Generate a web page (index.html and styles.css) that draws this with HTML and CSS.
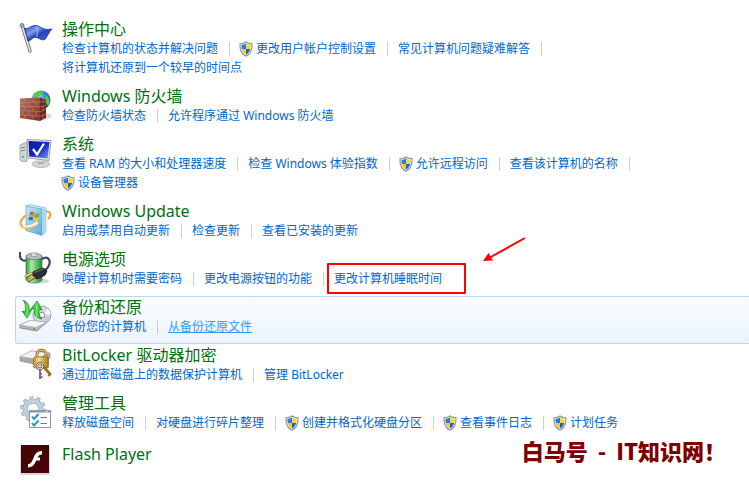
FILE: index.html
```html
<!DOCTYPE html>
<html lang="zh-CN">

<head>
    <meta charset="UTF-8">
    <meta name="viewport" content="width=device-width, initial-scale=1.0">
    <title>系统和安全</title>
    <link rel="stylesheet" href="styles.css">
</head>

<body>

    <!-- Shared shapes -->
    <svg class="defs" width="0" height="0" aria-hidden="true">
        <defs>
            <linearGradient id="flagBlue" x1="0" y1="0" x2="1" y2="1">
                <stop offset="0" stop-color="#2a48c8" />
                <stop offset=".35" stop-color="#7f9bea" />
                <stop offset=".55" stop-color="#2440b8" />
                <stop offset="1" stop-color="#4f74dc" />
            </linearGradient>
            <radialGradient id="globe" cx=".35" cy=".3" r=".8">
                <stop offset="0" stop-color="#a5e4ff" />
                <stop offset=".45" stop-color="#2f8be0" />
                <stop offset="1" stop-color="#0a3a9a" />
            </radialGradient>
            <linearGradient id="brick" x1="0" y1="0" x2="1" y2="1">
                <stop offset="0" stop-color="#b9705c" />
                <stop offset="1" stop-color="#7c3022" />
            </linearGradient>
            <linearGradient id="screen" x1="0" y1="0" x2="1" y2="1">
                <stop offset="0" stop-color="#0a18a0" />
                <stop offset=".5" stop-color="#1228c4" />
                <stop offset="1" stop-color="#7f9cf4" />
            </linearGradient>
            <linearGradient id="box" x1="0" y1="0" x2="1" y2="1">
                <stop offset="0" stop-color="#c4e8f8" />
                <stop offset="1" stop-color="#5fa8d4" />
            </linearGradient>
            <linearGradient id="metal" x1="0" y1="0" x2="0" y2="1">
                <stop offset="0" stop-color="#fafafa" />
                <stop offset="1" stop-color="#9a9ea2" />
            </linearGradient>
            <linearGradient id="battery" x1="0" y1="0" x2="1" y2="0">
                <stop offset="0" stop-color="#2b9a3c" />
                <stop offset=".35" stop-color="#a6eca0" />
                <stop offset="1" stop-color="#1c8a30" />
            </linearGradient>
            <linearGradient id="gold" x1="0" y1="0" x2="1" y2="0">
                <stop offset="0" stop-color="#c2922c" />
                <stop offset=".35" stop-color="#f3dc8c" />
                <stop offset="1" stop-color="#a87414" />
            </linearGradient>
            <linearGradient id="green" x1="0" y1="0" x2="1" y2="0">
                <stop offset="0" stop-color="#0c9c1c" />
                <stop offset=".5" stop-color="#6ee85c" />
                <stop offset="1" stop-color="#0c9c1c" />
            </linearGradient>
            <symbol id="shield" viewBox="0 0 14 16">
                <path d="M7 .3C5.300 1.600 3 2.200.5 2.200.2 8.500 1.400 13 7 15.700 12.600 13 13.800 8.500 13.500 2.200 11 2.200 8.700 1.600 7 .3z" fill="#8b8f94" />
                <path d="M7 1.400C5.400 2.500 3.500 3 1.500 3.100 1.400 8.500 2.600 12.300 7 14.600 11.400 12.300 12.600 8.500 12.500 3.100 10.500 3 8.600 2.500 7 1.400z" fill="#e2e5e6" />
                <path d="M7 2.600C5.700 3.400 4.200 3.800 2.500 4 2.500 5.600 2.600 6.900 2.900 8H7z" fill="#1f7fe0" />
                <path d="M7 2.600C8.300 3.400 9.800 3.800 11.500 4 11.500 5.600 11.400 6.900 11.100 8H7z" fill="#fbd62c" />
                <path d="M2.900 8C3.500 10.500 4.800 12.300 7 13.500V8z" fill="#fbc81c" />
                <path d="M11.100 8C10.500 10.500 9.200 12.300 7 13.500V8z" fill="#1466d0" />
            </symbol>
        </defs>
    </svg>

    <main class="panel">

        <section class="category">
            <svg class="icon" viewBox="0 0 34 34" aria-hidden="true">
                <path d="M3 3L11 29" stroke="#70757c" stroke-width="3.400" stroke-linecap="round" />
                <path d="M3 3L11 29" stroke="#e4e6e8" stroke-width="1.600" stroke-linecap="round" />
                <circle cx="3" cy="3.500" r="2" fill="#a4a8ac" stroke="#62666a" stroke-width=".6" />
                <path d="M5.500 6C9 8 12 3 17 3.500 22 4 24 9 33 7 30 10 29 13 26.500 17 22 20 19 14 15 15.500 12.500 16.500 11 19.500 9 19z" fill="url(#flagBlue)" stroke="#1c318f" stroke-width=".8" />
                <path d="M17 4.500C19 7 19 12 17.500 15" fill="none" stroke="#adc0f4" stroke-width="1.500" opacity=".6" />
            </svg>
            <div class="content">
                <h2><a href="#">操作中心</a></h2>
                <ul class="tasks">
                    <li><a href="#">检查计算机的状态并解决问题</a></li>
                    <li><a href="#"><svg class="shield" aria-hidden="true"><use href="#shield" /></svg>更改用户帐户控制设置</a></li>
                    <li><a href="#">常见计算机问题疑难解答</a></li>
                    <li><a href="#">将计算机还原到一个较早的时间点</a></li>
                </ul>
            </div>
        </section>

        <section class="category">
            <svg class="icon" viewBox="0 0 34 34" aria-hidden="true">
                <ellipse cx="25" cy="27" rx="8" ry="3" fill="#d8d8d8" />
                <circle cx="22" cy="11" r="9.500" fill="url(#globe)" />
                <path d="M15 5C18 2 22 2 24 3 23 6 20 7 18 9 16 9 14 8 15 5zM26 5C30 8 32 12 30 16 28 17 27 14 25 12 25 9 28 8 26 5z" fill="#5cc63c" />
                <path d="M1 9.500L21 8.500V32L1 29z" fill="url(#brick)" />
                <path d="M21 8.500L27 11V29L21 32z" fill="#6c2a1e" />
                <path d="M1 13.500L21 13M1 17.500L21 17.800 27 16.500M1 21.500L21 22.500 27 20.500M1 25.500L21 27.200 27 25M21 13L27 13M6 9.500V13.400M14 9.200V13M3.500 13.400V17.500M10 13.300V17.600M17 13V17.700M6 17.600V21.700M14 17.700V22M3.500 21.600V25.700M10 22V26.300M17 22.300V26.700M6 26V29.600M14 26.700V30.800M24 10V13M24 17V21.500M24 25.500V30.500" fill="none" stroke="#c08a7a" stroke-width=".6" />
            </svg>
            <div class="content">
                <h2><a href="#">Windows 防火墙</a></h2>
                <ul class="tasks">
                    <li><a href="#">检查防火墙状态</a></li>
                    <li><a href="#">允许程序通过 Windows 防火墙</a></li>
                </ul>
            </div>
        </section>

        <section class="category">
            <svg class="icon" viewBox="0 0 34 34" aria-hidden="true">
                <path d="M1 8L8 5V24L4 25 1 23z" fill="#d3d6d9" stroke="#888d92" stroke-width=".7" />
                <path d="M2.500 11L6 10M2.500 14L6 13" stroke="#777c80" />
                <circle cx="4" cy="20" r="1.100" fill="#35b83a" />
                <ellipse cx="22" cy="27" rx="9" ry="3.500" fill="#d3d6da" stroke="#9a9fa4" stroke-width=".6" />
                <path d="M18 22H26L25 27H19z" fill="url(#metal)" />
                <path d="M8 2.500L32 3.500 30 23.500 9 21z" fill="#e6e8eb" stroke="#8a8f95" stroke-width=".8" />
                <path d="M9.500 4L30.500 5 28.700 21.500 10.300 19.500z" fill="url(#screen)" />
                <path d="M14 12L18 17.500 25 6.500" fill="none" stroke="#fff" stroke-width="2.200" />
            </svg>
            <div class="content">
                <h2><a href="#">系统</a></h2>
                <ul class="tasks">
                    <li><a href="#">查看 RAM 的大小和处理器速度</a></li>
                    <li><a href="#">检查 Windows 体验指数</a></li>
                    <li><a href="#"><svg class="shield" aria-hidden="true"><use href="#shield" /></svg>允许远程访问</a></li>
                    <li><a href="#">查看该计算机的名称</a></li>
                    <li><a href="#"><svg class="shield" aria-hidden="true"><use href="#shield" /></svg>设备管理器</a></li>
                </ul>
            </div>
        </section>

        <section class="category">
            <svg class="icon" viewBox="0 0 34 34" aria-hidden="true">
                <path d="M25 8C32 6 33 11 29 15" fill="none" stroke="#eda53a" stroke-width="2.200" />
                <path d="M7 2L11 .5 27 4V27.500L24 31z" fill="#d6eef9" stroke="#74b4d8" stroke-width=".7" />
                <path d="M7 2L23 5V31.500L7 26.500z" fill="url(#box)" stroke="#5aa1cb" stroke-width=".7" />
                <path d="M23 5L27 4V28L23 31.500z" fill="#a9d7ec" />
                <path d="M11 8C13 7 14 7.500 15 8.500L14.300 12.200C13 11 12 11 10.300 12z" fill="#e95c2c" />
                <path d="M16 9C17.500 10 19 10 20.500 9L19.800 12.800C18 13.600 17 13.600 15.300 12.700z" fill="#72b82c" />
                <path d="M10 13C12 12 13 12.500 14.100 13.300L13.400 16.800C12 15.800 11 16 9.300 16.800z" fill="#2c6cc8" />
                <path d="M15.100 13.800C16.500 14.600 18 14.600 19.600 13.800L18.900 17.500C17 18.300 16 18.300 14.400 17.500z" fill="#fac42c" />
                <path d="M6 12C-2 19 2 25 10 23.500 16 22 18 19 18 19" fill="none" stroke="#f5ae48" stroke-width="2.400" stroke-linecap="round" />
                <path d="M5 22.500C10 23 15 21 18 19" fill="none" stroke="#fff4d8" stroke-width="2.400" stroke-linecap="round" />
            </svg>
            <div class="content">
                <h2><a href="#">Windows Update</a></h2>
                <ul class="tasks">
                    <li><a href="#">启用或禁用自动更新</a></li>
                    <li><a href="#">检查更新</a></li>
                    <li><a href="#">查看已安装的更新</a></li>
                </ul>
            </div>
        </section>

        <section class="category">
            <svg class="icon" viewBox="0 0 34 34" aria-hidden="true">
                <ellipse cx="20" cy="29" rx="10" ry="2.500" fill="#d4d4d4" />
                <path d="M1 1C0 7 4 10 8 8M23 7C29 3 33 9 29 15 28 17 27 17 25 19" fill="none" stroke="#3c4658" stroke-width="2.200" stroke-linecap="round" />
                <path d="M7 4V28C9 32 21 32 23 28V4z" fill="url(#battery)" stroke="#4d7754" stroke-width=".7" />
                <ellipse cx="15" cy="4.500" rx="8" ry="3.200" fill="#b4bdc2" stroke="#606b72" stroke-width=".7" />
                <path d="M12 1V3.500C13 5 17 5 18 3.500V1z" fill="#d8dde0" stroke="#737d84" stroke-width=".6" />
                <path d="M14 20L24 16 28 19 26 23 18 27 14 24z" fill="#2c2f36" stroke="#15181c" />
                <path d="M15 20.500L24 17" stroke="#777d88" />
                <path d="M14 21L6 25M16 25L9 29" stroke="#845a24" stroke-width="3" />
                <path d="M13 21L6 24.500M15 25L9 28.500" stroke="#efcf86" stroke-width="1.400" />
            </svg>
            <div class="content">
                <h2><a href="#">电源选项</a></h2>
                <ul class="tasks">
                    <li><a href="#">唤醒计算机时需要密码</a></li>
                    <li><a href="#">更改电源按钮的功能</a></li>
                    <li class="marked">
                        <a href="#">更改计算机睡眠时间</a>
                        <svg class="arrow" viewBox="0 0 44 26" aria-hidden="true">
                            <path d="M42 2L6 22" stroke="#f00" stroke-width="2" />
                            <path d="M0 25L5.500 17 10 24.500z" fill="#f00" />
                        </svg>
                    </li>
                </ul>
            </div>
        </section>

        <section class="category active">
            <svg class="icon" viewBox="0 0 34 34" aria-hidden="true">
                <circle cx="23" cy="15" r="9" fill="#d3d7de" stroke="#878c94" stroke-width=".8" />
                <path d="M23 15L29 9A9 9 0 0 1 32 14z" fill="#f8f8ff" />
                <path d="M23 15L31 18 28 22z" fill="#d9b9e2" />
                <circle cx="23" cy="15" r="2.800" fill="#fff" stroke="#888d94" />
                <path d="M1 25L10 21 28 22 18 31 1 28z" fill="#b3b7bb" stroke="#777b80" stroke-width=".7" />
                <path d="M1 25L11 20.500 28 22 17 27.500z" fill="#f5f6f7" stroke="#a4a8ac" stroke-width=".6" />
                <circle cx="15" cy="29" r="1" fill="#22b82a" />
                <path d="M4 0C7 4 7 8 6 12L3 11 8 18 13 9 10 11C11 7 9 2 4 0z" fill="url(#green)" stroke="#129421" stroke-width=".8" />
                <path d="M12 9L18 1 23 10 20.500 9.500C19 13 20 16 23 19 17 18 14 14 16 9z" fill="url(#green)" stroke="#129421" stroke-width=".8" />
            </svg>
            <div class="content">
                <h2><a href="#">备份和还原</a></h2>
                <ul class="tasks">
                    <li><a href="#">备份您的计算机</a></li>
                    <li><a class="hover" href="#">从备份还原文件</a></li>
                </ul>
            </div>
        </section>

        <section class="category">
            <svg class="icon" viewBox="0 0 34 34" aria-hidden="true">
                <path d="M1 9L12 3 31 5V10L15 16 1 13z" fill="#a4a8ac" stroke="#808489" stroke-width=".6" />
                <path d="M1 8.500L12 3 31 5 16 11z" fill="#f2f3f4" stroke="#a9adb1" stroke-width=".6" />
                <path d="M18 10V6C18 1 27 1 27 6V10" fill="none" stroke="#9b7426" stroke-width="3" />
                <path d="M18 10V6C18 1 27 1 27 6V10" fill="none" stroke="#e6ca74" stroke-width="1.200" />
                <rect x="14.500" y="9" width="15" height="11" rx="1.500" fill="url(#gold)" stroke="#976c19" stroke-width=".7" />
                <path d="M24 18L31 26 29.500 28" fill="none" stroke="#99701c" stroke-width="2.800" />
                <circle cx="21" cy="18" r="3" fill="none" stroke="#6a6d70" stroke-width="2.400" />
                <circle cx="21" cy="18" r="3" fill="none" stroke="#d8dadc" />
                <path d="M21 21V31M21 26H23M21 29H23.500" stroke="#777b7f" stroke-width="2" />
            </svg>
            <div class="content">
                <h2><a href="#">BitLocker 驱动器加密</a></h2>
                <ul class="tasks">
                    <li><a href="#">通过加密磁盘上的数据保护计算机</a></li>
                    <li><a href="#">管理 BitLocker</a></li>
                </ul>
            </div>
        </section>

        <section class="category">
            <svg class="icon" viewBox="0 0 34 34" aria-hidden="true">
                <circle cx="14" cy="13" r="11" fill="none" stroke="#8298ac" stroke-width="3.600" stroke-dasharray="3.400 3.512" />
                <circle cx="14" cy="13" r="8" fill="none" stroke="#879db1" stroke-width="5" />
                <circle cx="14" cy="13" r="8" fill="none" stroke="#bfd0df" stroke-width="3.800" />
                <circle cx="14" cy="13" r="11" fill="none" stroke="#bfd0df" stroke-width="2.400" stroke-dasharray="2.800 4.112" stroke-dashoffset="-.3" />
                <rect x="10.500" y="14.500" width="21" height="17" fill="#fafcfe" stroke="#8a9bb0" />
                <path d="M11 15.500H31" stroke="#8598b0" stroke-width="2" />
                <path d="M26 15.500H30" stroke="#e8eef5" stroke-dasharray="1 1" />
                <path d="M13 20.500L15 23 19.500 18M13 27L15 29.500 19.500 24.500" fill="none" stroke="#2495c2" stroke-width="1.900" />
                <path d="M21.500 21.500H28M21.500 27.500H28" stroke="#707e8e" />
            </svg>
            <div class="content">
                <h2><a href="#">管理工具</a></h2>
                <ul class="tasks">
                    <li><a href="#">释放磁盘空间</a></li>
                    <li><a href="#">对硬盘进行碎片整理</a></li>
                    <li><a href="#"><svg class="shield" aria-hidden="true"><use href="#shield" /></svg>创建并格式化硬盘分区</a></li>
                    <li><a href="#"><svg class="shield" aria-hidden="true"><use href="#shield" /></svg>查看事件日志</a></li>
                    <li><a href="#"><svg class="shield" aria-hidden="true"><use href="#shield" /></svg>计划任务</a></li>
                </ul>
            </div>
        </section>

        <section class="category">
            <svg class="icon" viewBox="0 0 34 34" aria-hidden="true">
                <rect x="1" y="2" width="30" height="29" rx="1" fill="#d8d8d8" />
                <rect x="2" y="1" width="28" height="28" fill="#470407" />
                <path d="M23 7V10.500C20.500 10.500 19.500 11.500 18.500 13.500H21V16.500H17.200C15.500 20.500 13.500 23.500 9 23.500V20C12 20 13 17.500 14.500 14 16 10 18 7 23 7z" fill="#fff" />
            </svg>
            <div class="content">
                <h2 class="single"><a href="#">Flash Player</a></h2>
            </div>
        </section>

    </main>

    <p class="signature">白马号&nbsp; - &nbsp;IT知识网！</p>

</body>

</html>
```

FILE: styles.css
```css
body {
    margin: 0;
    background: white;
    font-family: "Noto Sans", "Noto Sans CJK SC", sans-serif;
    font-size: 12px;
    overflow: hidden;
}

a {
    color: #0066cc;
    text-decoration: none;
}

.defs {
    position: absolute;
}

.panel {
    padding: 18px 0 0 15px;
}

.category {
    display: flex;
    gap: 9px;
    padding: 0 40px 7px 3px;
    border: 1px solid transparent;
    border-right: none;
    border-radius: 3px 0 0 3px;
}

.category.active {
    border-color: #b8d6fb;
    background: linear-gradient(#fbfdff, #ebf3fd);
}

.icon {
    flex: none;
    width: 34px;
    height: 34px;
    margin-top: 3px;
}

.content {
    flex: 1;
}

h2 {
    margin: 0;
    font-size: 16px;
    font-weight: normal;
    line-height: 20px;
}

h2 a {
    color: #00700f;
}

h2.single {
    padding-top: 3px;
}

.tasks {
    display: flex;
    flex-wrap: wrap;
    margin: 0;
    padding: 0;
    list-style: none;
}

.tasks li {
    display: flex;
    align-items: center;
    height: 19px;
    line-height: 19px;
    white-space: nowrap;
}

.tasks li:not(:last-child)::after {
    content: "";
    width: 1px;
    height: 14px;
    margin: 0 10px 0 11px;
    background: #cccccc;
}

.tasks a {
    display: flex;
    align-items: center;
}

.tasks a.hover {
    color: #3399ff;
    text-decoration: underline;
}

.shield {
    width: 14px;
    height: 16px;
    margin: 0 3px 0 -1px;
}

/* red frame and arrow over the sleep setting */
.marked {
    position: relative;
}

.marked::before {
    content: "";
    position: absolute;
    top: -6px;
    left: -7px;
    right: -24px;
    height: 27px;
    border: 2px solid red;
    border-radius: 1px;
    pointer-events: none;
}

.arrow {
    position: absolute;
    left: 149px;
    top: -33px;
    width: 44px;
    height: 26px;
}

.signature {
    position: absolute;
    right: 23px;
    bottom: 24px;
    margin: 0;
    color: #7d0000;
    font-family: "Noto Sans CJK SC", sans-serif;
    font-size: 22px;
    font-weight: 900;
    line-height: 32px;
}
```
